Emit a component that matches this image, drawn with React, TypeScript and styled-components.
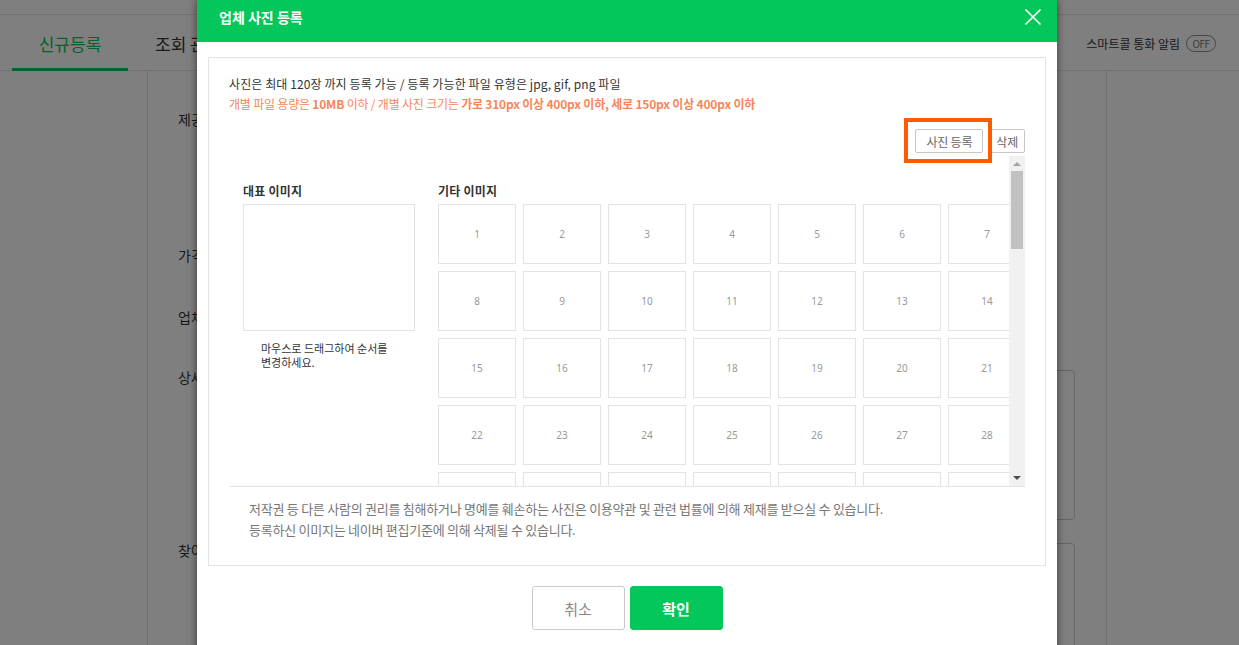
import React from "react";
import styled, { createGlobalStyle } from "styled-components";

const GREEN = "#03c75a";
const FONT = `"Noto Sans CJK KR", "Noto Sans", sans-serif`;

const GlobalStyle = createGlobalStyle`
  html, body { margin: 0; padding: 0; }
  body { font-family: ${FONT}; color: #333; }
  * { box-sizing: border-box; }
`;

const Page = styled.div`
  position: relative;
  width: 1239px;
  height: 645px;
  overflow: hidden;
  background: #fff;
`;

const TopStrip = styled.div`
  height: 15px;
  border-bottom: 1px solid #e2e2e2;
`;

const TabRow = styled.div`
  display: flex;
  align-items: stretch;
  height: 56px;
  padding-left: 12px;
  border-bottom: 1px solid #e4e4e4;
`;

const Tab = styled.div<{ $active?: boolean }>`
  display: flex;
  align-items: center;
  justify-content: center;
  white-space: nowrap;
  flex-shrink: 0;
  margin-left: ${(p) => (p.$active ? "0" : "27px")};
  font-size: 17px;
  color: ${(p) => (p.$active ? GREEN : "#333")};
  border-bottom: 3px solid ${(p) => (p.$active ? GREEN : "transparent")};
  margin-bottom: -1px;
  padding-top: 3px;
  width: ${(p) => (p.$active ? "116px" : "auto")};
`;

const CallAlert = styled.div`
  margin-left: auto;
  margin-right: 23px;
  display: flex;
  align-items: center;
  gap: 6px;
  font-size: 12px;
  color: #333;
  padding-top: 2px;
`;

const OffPill = styled.span`
  display: inline-flex;
  align-items: center;
  justify-content: center;
  width: 30px;
  height: 17px;
  border: 1px solid #888;
  border-radius: 9px;
  font-size: 10px;
  color: #777;
  letter-spacing: -0.5px;
`;

const BodyRow = styled.div`
  display: flex;
  height: 574px;
`;

const SideNav = styled.div`
  width: 148px;
  border-right: 1px solid #e2e2e2;
`;

const FormArea = styled.div`
  flex: 1;
  padding: 38px 31px 0 30px;
  display: flex;
  flex-direction: column;
`;

const Field = styled.div<{ $gap: number }>`
  display: flex;
  gap: 40px;
  margin-top: ${(p) => p.$gap}px;
`;

const FieldLabel = styled.div`
  width: 80px;
  font-size: 14px;
  line-height: 20px;
  color: #333;
`;

const TextBox = styled.div<{ $h: number }>`
  flex: 1;
  height: ${(p) => p.$h}px;
  margin-top: 3px;
  border: 1px solid #ccc;
  border-radius: 4px;
`;

const RightNav = styled.div`
  width: 133px;
  border-left: 1px solid #e2e2e2;
`;

const Dim = styled.div`
  position: absolute;
  inset: 0;
  background: rgba(0, 0, 0, 0.5);
`;

const Modal = styled.div`
  position: absolute;
  left: 197px;
  top: 0;
  width: 860px;
  height: 660px;
  background: #fff;
  box-shadow: 0 0 8px rgba(0, 0, 0, 0.55);
  display: flex;
  flex-direction: column;
`;

const ModalHeader = styled.div`
  height: 42px;
  background: ${GREEN};
  display: flex;
  align-items: flex-start;
  justify-content: space-between;
  padding: 7px 15px 0 22px;
`;

const ModalTitle = styled.h1`
  margin: 0;
  font-size: 14px;
  line-height: 20px;
  font-weight: 700;
  color: #fff;
`;

const CloseButton = styled.button`
  width: 18px;
  height: 18px;
  margin-top: 1px;
  padding: 0;
  border: 0;
  background: transparent;
  display: flex;
  align-items: center;
  justify-content: center;
  cursor: pointer;
`;

const ModalBody = styled.div`
  padding: 15px 11px 0;
`;

const ContentBox = styled.div`
  border: 1px solid #e3e3e3;
  padding: 16px 20px 0 20px;
`;

const NoticeLine = styled.p<{ $warn?: boolean }>`
  margin: 0;
  font-size: 12px;
  line-height: 20px;
  letter-spacing: ${(p) => (p.$warn ? "-0.2px" : "0.1px")};
  color: ${(p) => (p.$warn ? "#f5875a" : "#333")};
  b { font-weight: 700; }
`;

const ActionRow = styled.div`
  display: flex;
  justify-content: flex-end;
  gap: 6px;
  margin-top: 15px;
`;

const SmallButton = styled.button<{ $highlight?: boolean }>`
  position: relative;
  height: 24px;
  padding: 0 ${(p) => (p.$highlight ? "10px" : "6px")};
  border: 1px solid #c6c6c6;
  border-radius: 2px;
  background: #fff;
  font-family: ${FONT};
  font-size: 12px;
  color: #666;
  letter-spacing: -0.2px;
  &::after {
    content: "";
    display: ${(p) => (p.$highlight ? "block" : "none")};
    position: absolute;
    left: -12px;
    top: -12px;
    right: -10px;
    bottom: -11px;
    border: 4px solid #ff5b00;
    pointer-events: none;
    z-index: 2;
  }
`;

const ScrollArea = styled.div`
  margin-top: 3px;
  height: 331px;
  display: flex;
  border-bottom: 1px solid #e3e3e3;
  margin-left: 1px;
`;

const Viewport = styled.div`
  flex: 1;
  overflow: hidden;
  display: flex;
  gap: 23px;
  padding: 27px 0 0 13px;
`;

const Column = styled.div`
  flex-shrink: 0;
  display: flex;
  flex-direction: column;
`;

const SectionLabel = styled.div`
  font-size: 12px;
  line-height: 16px;
  font-weight: 700;
  color: #333;
  margin-bottom: 5px;
  letter-spacing: 0.2px;
`;

const MainImage = styled.div`
  width: 172px;
  height: 127px;
  border: 1px solid #e3e3e3;
`;

const Hint = styled.p`
  margin: 10px 0 0;
  padding: 0 18px;
  width: 172px;
  font-size: 11px;
  line-height: 14px;
  color: #333;
  word-break: keep-all;
`;

const Grid = styled.div`
  display: grid;
  grid-template-columns: repeat(7, 78px);
  grid-auto-rows: 60px;
  gap: 7px;
`;

const Cell = styled.div`
  border: 1px solid #e3e3e3;
  display: flex;
  align-items: center;
  justify-content: center;
  font-size: 10px;
  color: #999;
  font-family: "Noto Sans", sans-serif;
`;

const Scrollbar = styled.div`
  width: 16px;
  flex-shrink: 0;
  background: #f1f1f1;
  display: flex;
  flex-direction: column;
  align-items: center;
`;

const Arrow = styled.div<{ $down?: boolean }>`
  width: 0;
  height: 0;
  border-left: 4px solid transparent;
  border-right: 4px solid transparent;
  ${(p) => (p.$down ? "border-top: 4px solid #505050;" : "border-bottom: 4px solid #a3a3a3;")}
  margin: ${(p) => (p.$down ? "auto 0 6px" : "6px 0 0")};
`;

const Thumb = styled.div`
  width: 12px;
  height: 78px;
  margin-top: 5px;
  background: #c1c1c1;
`;

const CopyNote = styled.div`
  padding: 11px 19px 25px 20px;
`;

const CopyLine = styled.p`
  margin: 0;
  font-size: 13px;
  line-height: 21px;
  color: #777;
  letter-spacing: -0.25px;
`;

const Footer = styled.div`
  display: flex;
  justify-content: center;
  gap: 5px;
  padding-top: 20px;
`;

const FooterButton = styled.button<{ $primary?: boolean }>`
  width: 93px;
  height: 44px;
  border-radius: 3px;
  border: 1px solid ${(p) => (p.$primary ? GREEN : "#c9c9c9")};
  background: ${(p) => (p.$primary ? GREEN : "#fff")};
  color: ${(p) => (p.$primary ? "#fff" : "#888")};
  font-family: ${FONT};
  font-size: 15px;
  font-weight: ${(p) => (p.$primary ? 700 : 400)};
`;

const cells = Array.from({ length: 35 }, (_, i) => i + 1);

export default function App() {
  return (
    <Page>
      <GlobalStyle />
      <TopStrip />
      <TabRow>
        <Tab $active>신규등록</Tab>
        <Tab>조회 관리</Tab>
        <CallAlert>
          스마트콜 통화 알림 <OffPill>OFF</OffPill>
        </CallAlert>
      </TabRow>
      <BodyRow>
        <SideNav />
        <FormArea>
          <Field $gap={0}>
            <FieldLabel>제공 서비스</FieldLabel>
          </Field>
          <Field $gap={116}>
            <FieldLabel>가격 정보</FieldLabel>
          </Field>
          <Field $gap={42}>
            <FieldLabel>업체 사진</FieldLabel>
          </Field>
          <Field $gap={40}>
            <FieldLabel>상세 설명</FieldLabel>
            <TextBox $h={150} />
          </Field>
          <Field $gap={20}>
            <FieldLabel>찾아오는 길</FieldLabel>
            <TextBox $h={150} />
          </Field>
        </FormArea>
        <RightNav />
      </BodyRow>
      <Dim />
      <Modal>
        <ModalHeader>
          <ModalTitle>업체 사진 등록</ModalTitle>
          <CloseButton aria-label="닫기">
            <svg width="18" height="18" viewBox="0 0 18 18">
              <path d="M1.5 1.5 L16.5 16.5 M16.5 1.5 L1.5 16.5" stroke="#fff" strokeWidth="1.6" fill="none" />
            </svg>
          </CloseButton>
        </ModalHeader>
        <ModalBody>
          <ContentBox>
            <NoticeLine>사진은 최대 120장 까지 등록 가능 / 등록 가능한 파일 유형은 jpg, gif, png 파일</NoticeLine>
            <NoticeLine $warn>
              개별 파일 용량은 <b>10MB</b> 이하 / 개별 사진 크기는{" "}
              <b>가로 310px 이상 400px 이하, 세로 150px 이상 400px 이하</b>
            </NoticeLine>
            <ActionRow>
              <SmallButton $highlight>사진 등록</SmallButton>
              <SmallButton>삭제</SmallButton>
            </ActionRow>
            <ScrollArea>
              <Viewport>
                <Column>
                  <SectionLabel>대표 이미지</SectionLabel>
                  <MainImage />
                  <Hint>마우스로 드래그하여 순서를 변경하세요.</Hint>
                </Column>
                <Column>
                  <SectionLabel>기타 이미지</SectionLabel>
                  <Grid>
                    {cells.map((n) => (
                      <Cell key={n}>{n}</Cell>
                    ))}
                  </Grid>
                </Column>
              </Viewport>
              <Scrollbar>
                <Arrow />
                <Thumb />
                <Arrow $down />
              </Scrollbar>
            </ScrollArea>
            <CopyNote>
              <CopyLine>
                저작권 등 다른 사람의 권리를 침해하거나 명예를 훼손하는 사진은 이용약관 및 관련 법률에 의해 제재를 받으실 수 있습니다.
              </CopyLine>
              <CopyLine>등록하신 이미지는 네이버 편집기준에 의해 삭제될 수 있습니다.</CopyLine>
            </CopyNote>
          </ContentBox>
        </ModalBody>
        <Footer>
          <FooterButton>취소</FooterButton>
          <FooterButton $primary>확인</FooterButton>
        </Footer>
      </Modal>
    </Page>
  );
}
